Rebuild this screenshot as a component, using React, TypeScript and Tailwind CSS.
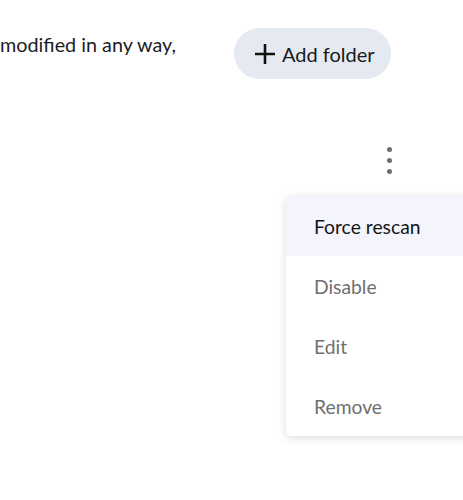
const menuItems = [
  { label: "Force rescan", active: true },
  { label: "Disable" },
  { label: "Edit" },
  { label: "Remove" },
];

const App = () => {
  return (
    <div className="relative h-[500px] w-[463px] overflow-hidden bg-white font-['Lato','Noto_Sans',sans-serif]">
      <div className="flex items-start pt-[28px]">
        <p className="w-[234px] shrink-0 pt-[3px] text-[19.8px] leading-[26px] text-[#1d1d1f]">
          modified in any way,
        </p>
        <button className="flex h-[51px] w-[157px] items-center gap-[6px] rounded-full bg-[#e5e9f2] pl-[20px] text-[20px] text-[#1a1a1a]">
          <svg width="22" height="22" viewBox="0 0 22 22" className="shrink-0">
            <path d="M11 1v20M1 11h20" stroke="#111" strokeWidth="2.6" />
          </svg>
          <span>Add folder</span>
        </button>
      </div>

      <div className="flex justify-end pr-[66px] pt-[67px]">
        <button className="flex h-[28px] w-[16px] flex-col items-center justify-center gap-[6px]">
          <span className="h-[5px] w-[5px] rounded-full bg-[#6e6e6e]" />
          <span className="h-[5px] w-[5px] rounded-full bg-[#6e6e6e]" />
          <span className="h-[5px] w-[5px] rounded-full bg-[#6e6e6e]" />
        </button>
      </div>

      <div className="absolute left-[286px] top-[196px] w-[200px] overflow-hidden rounded-[5px] bg-white shadow-[0_2px_10px_rgba(0,0,0,0.14)]">
        {menuItems.map((item) => (
          <div
            key={item.label}
            className={
              item.active
                ? "flex h-[60px] items-center bg-[#f3f4fc] pl-[28px] pt-[3px] text-[19.3px] text-[#161616]"
                : "flex h-[60px] items-center pl-[28px] pt-[3px] text-[19.3px] text-[#6f6f6f]"
            }
          >
            {item.label}
          </div>
        ))}
      </div>
    </div>
  );
};

export default App;
